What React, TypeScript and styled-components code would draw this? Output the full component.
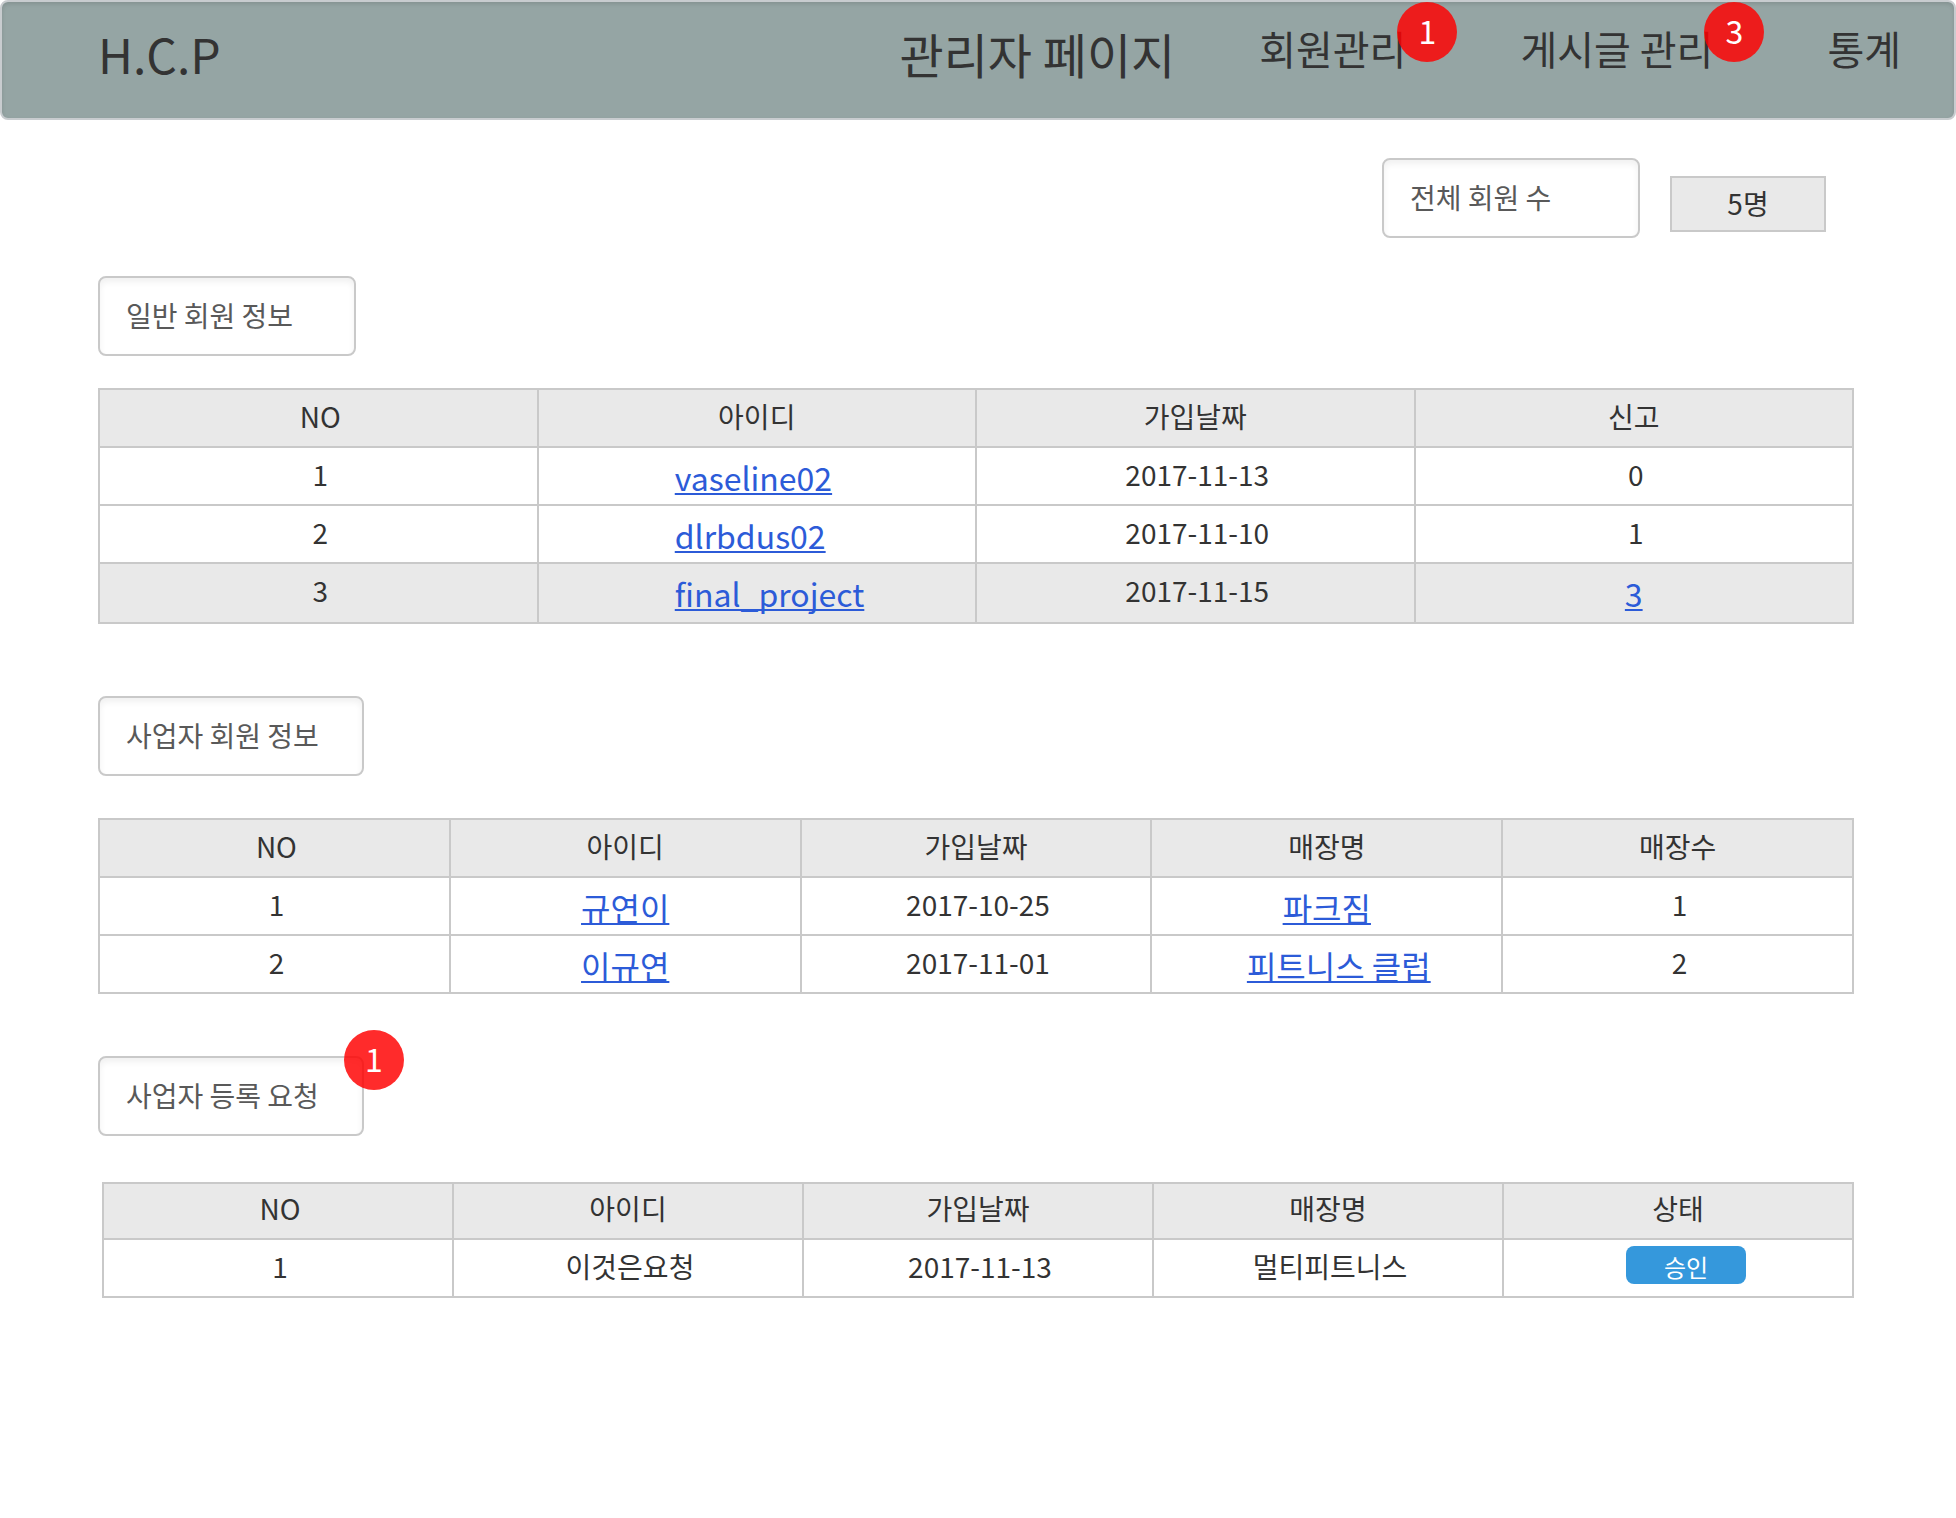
import React from "react";
import styled, { createGlobalStyle } from "styled-components";

const GlobalStyle = createGlobalStyle`
  * {
    box-sizing: border-box;
  }
  body {
    margin: 0;
    background: #fff;
    color: #333;
    font-family: "Noto Sans CJK KR", "Noto Sans", sans-serif;
    font-size: 28px;
    line-height: 40px;
  }
`;

const Header = styled.header`
  display: flex;
  align-items: flex-start;
  padding: 16px 53px 0 96px;
  height: 120px;
  border: 2px solid #c8cccf;
  border-radius: 8px;
  background: #95a5a4;
  box-shadow: inset 0 2px 4px rgba(0, 0, 0, 0.12);
`;

const Brand = styled.a`
  color: #333;
  font-size: 48px;
  line-height: 70px;
  text-decoration: none;
`;

const PageTitle = styled.h1`
  margin: 0 84px 0 auto;
  font-size: 48px;
  font-weight: 400;
  line-height: 70px;
  white-space: nowrap;
`;

const Nav = styled.nav`
  display: flex;
  gap: 63px;
`;

const NavItem = styled.div`
  display: flex;
  align-items: flex-start;
`;

const NavLink = styled.a`
  color: #333;
  font-size: 40px;
  line-height: 60px;
  text-decoration: none;
  white-space: nowrap;
`;

const Badge = styled.span`
  width: 60px;
  height: 60px;
  border-radius: 50%;
  background: rgba(255, 0, 0, 0.83);
  color: #fff;
  font-size: 32px;
  line-height: 56px;
  text-align: center;
`;

const NavBadge = styled(Badge)`
  margin: -16px 0 0 -9px;
`;

const CornerBadge = styled(Badge)`
  position: absolute;
  top: -26px;
  right: -40px;
`;

const Main = styled.main`
  padding: 38px 102px 40px 98px;
`;

const Summary = styled.div`
  display: flex;
  justify-content: flex-end;
  align-items: flex-end;
  gap: 30px;
  padding-right: 28px;
`;

const Field = styled.input<{ $wide?: boolean }>`
  display: block;
  width: ${(p) => (p.$wide ? 266 : 258)}px;
  height: 80px;
  margin: 0;
  padding: 0 26px 2px;
  border: 2px solid #c9c9c9;
  border-radius: 8px;
  background: #fff;
  box-shadow: inset 0 4px 6px rgba(0, 0, 0, 0.06);
  color: #595959;
  font: inherit;
  outline: none;
`;

const Total = styled.output`
  width: 156px;
  height: 56px;
  margin-bottom: 6px;
  padding: 5px 0;
  border: 2px solid #c9c9c9;
  background: #e9e9e9;
  text-align: center;
`;

const Section = styled.section<{ $before: number; $gap: number }>`
  display: flex;
  flex-direction: column;
  align-items: flex-start;
  gap: ${(p) => p.$gap}px;
  margin-top: ${(p) => p.$before}px;
`;

const FieldWrap = styled.div`
  position: relative;
`;

const TableArea = styled.div<{ $inset?: boolean }>`
  width: 100%;
  padding-left: ${(p) => (p.$inset ? 4 : 0)}px;
`;

const Table = styled.table`
  width: 100%;
  table-layout: fixed;
  border-collapse: collapse;
`;

const Row = styled.tr<{ $height?: number; $shaded?: boolean }>`
  height: ${(p) => p.$height ?? 58}px;
  background: ${(p) => (p.$shaded ? "#e9e9e9" : "#fff")};
`;

const HeadCell = styled.th<{ $compact?: boolean }>`
  padding: ${(p) => (p.$compact ? 4 : 6)}px 0 0;
  border: 2px solid #c9c9c9;
  font-weight: 400;
  vertical-align: top;

  &:first-child {
    padding-left: 4px;
  }
`;

const Cell = styled.td`
  padding: 6px 0 0 4px;
  border: 2px solid #c9c9c9;
  text-align: center;
  vertical-align: top;
`;

const LinkCell = styled(Cell)<{ $indent?: boolean }>`
  padding: 9px 0 0 ${(p) => (p.$indent ? 24 : 0)}px;
  font-size: 32px;
`;

const ActionCell = styled(Cell)`
  padding: 6px 0 0 16px;
  line-height: 0;
`;

const TextLink = styled.a`
  color: #2c5bd8;
  text-decoration: underline;
  text-decoration-thickness: 2px;
  text-underline-offset: 2px;
  text-decoration-skip-ink: none;
  white-space: nowrap;
`;

const IdSlot = styled.div`
  width: 164px;
  margin: 0 auto;
  text-align: left;
`;

const ApproveButton = styled.button`
  width: 120px;
  height: 38px;
  padding: 4px 0 0;
  border: 0;
  border-radius: 8px;
  background: #3598dc;
  color: #fff;
  font-family: inherit;
  font-size: 24px;
  line-height: 34px;
  cursor: pointer;
`;

const members = [
  { no: 1, id: "vaseline02", joined: "2017-11-13", reports: 0 },
  { no: 2, id: "dlrbdus02", joined: "2017-11-10", reports: 1 },
  { no: 3, id: "final_project", joined: "2017-11-15", reports: 3 },
];

const owners = [
  { no: 1, id: "규연이", joined: "2017-10-25", store: "파크짐", stores: 1 },
  { no: 2, id: "이규연", joined: "2017-11-01", store: "피트니스 클럽", stores: 2 },
];

const requests = [
  { no: 1, id: "이것은요청", joined: "2017-11-13", store: "멀티피트니스" },
];

function TableHead({ labels, compact }: { labels: string[]; compact?: boolean }) {
  return (
    <thead>
      <Row $shaded $height={compact ? 56 : 58}>
        {labels.map((label) => (
          <HeadCell key={label} scope="col" $compact={compact}>
            {label}
          </HeadCell>
        ))}
      </Row>
    </thead>
  );
}

export default function App() {
  return (
    <>
      <GlobalStyle />
      <Header>
        <Brand href="#">H.C.P</Brand>
        <PageTitle>관리자 페이지</PageTitle>
        <Nav>
          <NavItem>
            <NavLink href="#members">회원관리</NavLink>
            <NavBadge>1</NavBadge>
          </NavItem>
          <NavItem>
            <NavLink href="#posts">게시글 관리</NavLink>
            <NavBadge>3</NavBadge>
          </NavItem>
          <NavItem>
            <NavLink href="#stats">통계</NavLink>
          </NavItem>
        </Nav>
      </Header>

      <Main>
        <Summary>
          <Field id="total-label" aria-label="전체 회원 수" defaultValue="전체 회원 수" />
          <Total htmlFor="total-label">5명</Total>
        </Summary>

        <Section $before={38} $gap={32}>
          <Field aria-label="일반 회원 정보" defaultValue="일반 회원 정보" />
          <TableArea>
            <Table>
              <TableHead labels={["NO", "아이디", "가입날짜", "신고"]} />
              <tbody>
                {members.map((m) => {
                  const flagged = m.reports >= 3;
                  return (
                    <Row key={m.no} $shaded={flagged} $height={flagged ? 60 : 58}>
                      <Cell>{m.no}</Cell>
                      <LinkCell>
                        <IdSlot>
                          <TextLink href="#member">{m.id}</TextLink>
                        </IdSlot>
                      </LinkCell>
                      <Cell>{m.joined}</Cell>
                      {flagged ? (
                        <LinkCell>
                          <TextLink href="#reports">{m.reports}</TextLink>
                        </LinkCell>
                      ) : (
                        <Cell>{m.reports}</Cell>
                      )}
                    </Row>
                  );
                })}
              </tbody>
            </Table>
          </TableArea>
        </Section>

        <Section $before={72} $gap={42}>
          <Field $wide aria-label="사업자 회원 정보" defaultValue="사업자 회원 정보" />
          <TableArea>
            <Table>
              <TableHead labels={["NO", "아이디", "가입날짜", "매장명", "매장수"]} />
              <tbody>
                {owners.map((o) => (
                  <Row key={o.no}>
                    <Cell>{o.no}</Cell>
                    <LinkCell>
                      <TextLink href="#owner">{o.id}</TextLink>
                    </LinkCell>
                    <Cell>{o.joined}</Cell>
                    <LinkCell $indent={o.stores > 1}>
                      <TextLink href="#store">{o.store}</TextLink>
                    </LinkCell>
                    <Cell>{o.stores}</Cell>
                  </Row>
                ))}
              </tbody>
            </Table>
          </TableArea>
        </Section>

        <Section $before={62} $gap={46}>
          <FieldWrap>
            <Field $wide aria-label="사업자 등록 요청" defaultValue="사업자 등록 요청" />
            <CornerBadge>1</CornerBadge>
          </FieldWrap>
          <TableArea $inset>
            <Table>
              <TableHead compact labels={["NO", "아이디", "가입날짜", "매장명", "상태"]} />
              <tbody>
                {requests.map((r) => (
                  <Row key={r.no}>
                    <Cell>{r.no}</Cell>
                    <Cell>{r.id}</Cell>
                    <Cell>{r.joined}</Cell>
                    <Cell>{r.store}</Cell>
                    <ActionCell>
                      <ApproveButton type="button">승인</ApproveButton>
                    </ActionCell>
                  </Row>
                ))}
              </tbody>
            </Table>
          </TableArea>
        </Section>
      </Main>
    </>
  );
}
